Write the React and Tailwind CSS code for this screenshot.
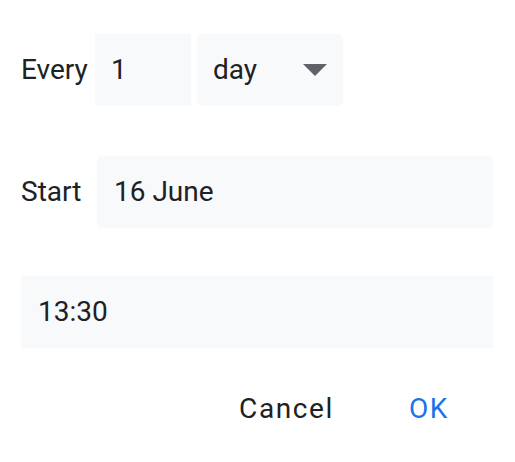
import React from "react";

const App = () => {
  return (
    <div
      className="w-[515px] h-[462px] bg-white text-[#202124] pl-[21px] pr-[22px] pt-[34px]"
      style={{ fontFamily: "Roboto, 'Liberation Sans', sans-serif" }}
    >
      {/* Repeat row */}
      <div className="flex items-center h-[72px]">
        <span className="text-[28px] w-[74px]">Every</span>
        <div className="w-[96px] h-[72px] bg-[#f8f9fa] flex items-center pl-[16px] text-[28px]">
          1
        </div>
        <div className="ml-[6px] w-[146px] h-[72px] bg-[#f8f9fa] rounded-[5px] flex items-center justify-between pl-[16px] pr-[16px] text-[28px]">
          <span>day</span>
          <svg width="24" height="12" viewBox="0 0 24 12">
            <path d="M0 0h24L12 12z" fill="#5f6368" />
          </svg>
        </div>
      </div>

      {/* Start date */}
      <div className="flex items-center mt-[50px] h-[72px]">
        <span className="text-[28px] w-[76px]">Start</span>
        <div className="flex-1 h-[72px] bg-[#f8f9fa] rounded-[5px] flex items-center pl-[17px] text-[28px]">
          16 June
        </div>
      </div>

      {/* Time */}
      <div className="mt-[48px] h-[72px] bg-[#f8f9fa] flex items-center pl-[17px] text-[28px]">
        13:30
      </div>

      {/* Actions */}
      <div className="flex justify-end items-center mt-[40px] pr-[44px] gap-[75px] text-[28px] tracking-[1.6px]">
        <button type="button" className="text-[#202124]">Cancel</button>
        <button type="button" className="text-[#1a73e8]">OK</button>
      </div>
    </div>
  );
};

export default App;
